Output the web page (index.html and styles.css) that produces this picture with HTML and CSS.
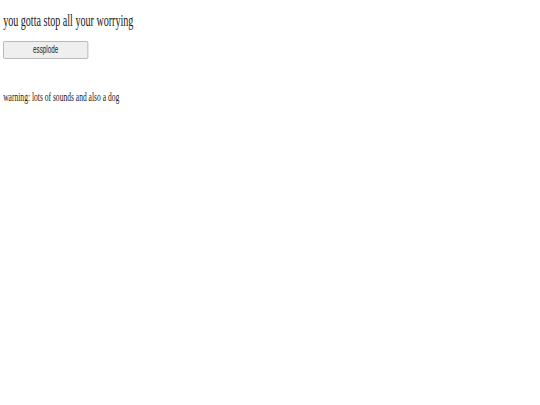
FILE: index.html
```html
<!DOCTYPE html>
<html>
<head>
<meta charset="utf-8">
<link rel="stylesheet" href="styles.css">
</head>
<body>
<div class="page">
  <h2 class="title">you gotta stop all your worrying</h2>
  <button class="btn">essplode</button>
  <p class="warn">warning: lots of sounds and also a dog</p>
</div>
</body>
</html>
```

FILE: styles.css
```css
html, body { margin: 0; padding: 0; background: #fff; overflow: hidden; }
.page {
  font-family: "Liberation Serif", serif;
  color: #1a1a1a;
  padding: 12px 5px;
  transform: scaleX(0.63);
  transform-origin: 0 0;
}
.title { font-size: 16px; font-weight: normal; margin: 0 0 9px; }
.btn {
  font-family: "Liberation Sans", sans-serif;
  font-size: 10px;
  color: #222;
  width: 135px;
  height: 18px;
  border: 1px solid #aaa;
  border-radius: 2px;
  background: #efefef;
  padding: 0;
}
.warn { font-size: 12px; margin: 31px 0 0; }
```
